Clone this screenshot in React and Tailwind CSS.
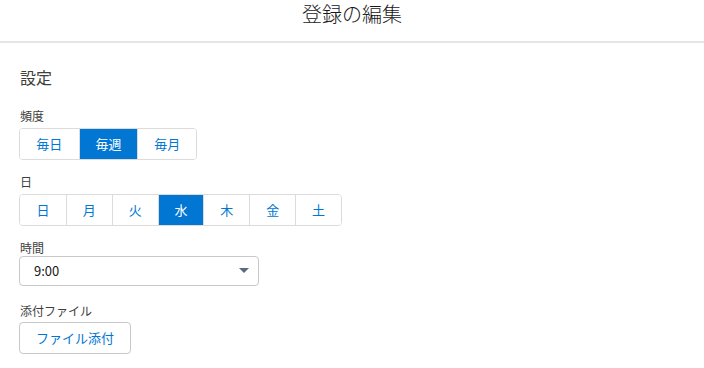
import React, { useState } from 'react';

const font = { fontFamily: '"Noto Sans CJK JP", "Noto Sans", sans-serif' };

const SegmentGroup = ({ items, value, onChange, itemClass }) => (
  <div className="inline-flex border border-[#dddbda] rounded-[4px] overflow-hidden">
    {items.map((item, i) => {
      const active = item === value;
      return (
        <button
          key={item}
          onClick={() => onChange(item)}
          className={`${itemClass} h-[30px] flex items-center justify-center text-[13px] ${
            i > 0 ? 'border-l border-[#dddbda]' : ''
          } ${active ? 'bg-[#0176d3] text-white border-[#0176d3]' : 'bg-white text-[#0176d3]'}`}
        >
          {item}
        </button>
      );
    })}
  </div>
);

const App = () => {
  const [freq, setFreq] = useState('毎週');
  const [day, setDay] = useState('水');

  return (
    <div className="min-h-screen bg-white text-[#181818]" style={font}>
      {/* Header */}
      <header className="pt-[2px] pb-[15px] border-b-2 border-[#e5e5e5] text-center">
        <h1 className="text-xl leading-6 font-light">登録の編集</h1>
      </header>

      <main className="px-[19px]">
        <h2 className="mt-[22px] text-base leading-6 pl-px text-[#3e3e3c]">設定</h2>

        {/* 頻度 */}
        <div className="mt-[18px]">
          <div className="text-xs leading-[18px] mb-[3px] pl-px text-[#3e3e3c]">頻度</div>
          <SegmentGroup
            items={['毎日', '毎週', '毎月']}
            value={freq}
            onChange={setFreq}
            itemClass="w-[58.67px]"
          />
        </div>

        {/* 日 */}
        <div className="mt-[13px]">
          <div className="text-xs leading-[18px] mb-[3px] pl-px text-[#3e3e3c]">日</div>
          <SegmentGroup
            items={['日', '月', '火', '水', '木', '金', '土']}
            value={day}
            onChange={setDay}
            itemClass="w-[45.86px]"
          />
        </div>

        {/* 時間 */}
        <div className="mt-[14px]">
          <div className="text-xs leading-[16px] pl-px text-[#3e3e3c]">時間</div>
          <div className="w-[240px] h-[30px] border border-[#c9c9c9] rounded-[4px] flex items-center justify-between pl-[14px] pr-[9px]">
            <span className="text-[13px]">9:00</span>
            <svg width="10" height="6" viewBox="0 0 10 6">
              <path d="M0 0 L10 0 L5 5 Z" fill="#5c6a80" />
            </svg>
          </div>
        </div>

        {/* 添付ファイル */}
        <div className="mt-[16px]">
          <div className="text-xs leading-[18px] mb-[2px] pl-px text-[#3e3e3c]">添付ファイル</div>
          <button className="w-[112px] h-[32px] border border-[#c9c9c9] rounded-[4px] bg-white text-[13px] text-[#0176d3]">
            ファイル添付
          </button>
        </div>
      </main>
    </div>
  );
};

export default App;
